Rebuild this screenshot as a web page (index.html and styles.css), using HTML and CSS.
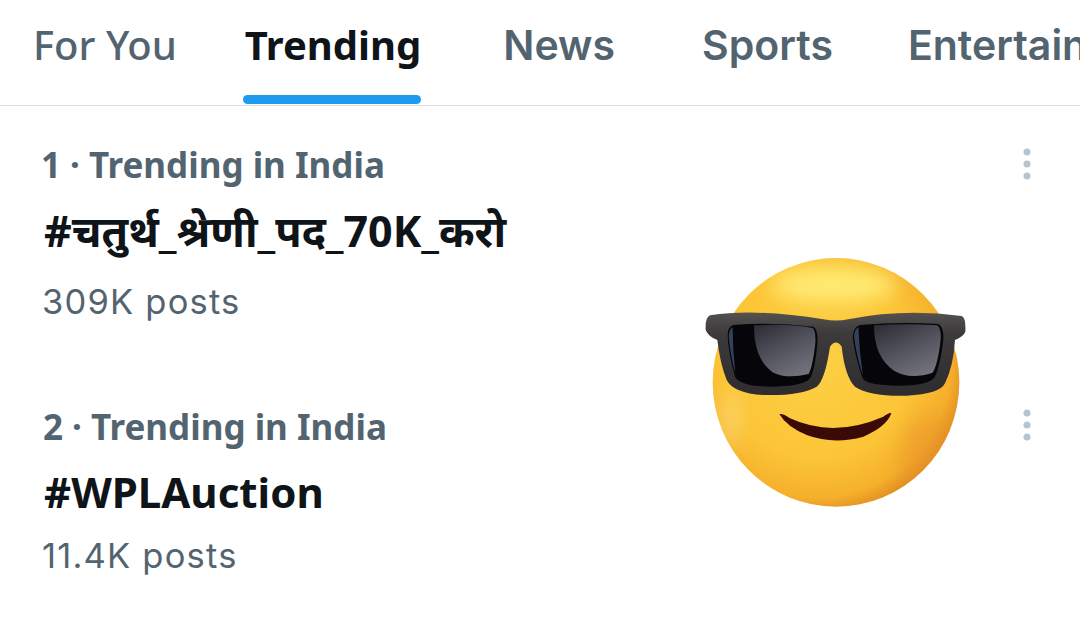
FILE: index.html
```html
<!DOCTYPE html>
<html lang="en">
<head>
<meta charset="utf-8">
<title>Trending</title>
<link rel="stylesheet" href="styles.css">
</head>
<body>
<div class="page">
  <nav class="tabs">
    <div class="tab t1">For You</div>
    <div class="tab t2 active">Trending<span class="bar"></span></div>
    <div class="tab t3 inter">News</div>
    <div class="tab t4 inter">Sports</div>
    <div class="tab t5 inter">Entertainment</div>
  </nav>
  <section class="list">
    <article class="row">
      <div class="meta">1 · Trending in India</div>
      <div class="topic hindi">#चतुर्थ_श्रेणी_पद_70K_करो</div>
      <div class="count">309K posts</div>
      <svg class="more" viewBox="0 0 8 32"><circle cx="4" cy="4" r="3.5"/><circle cx="4" cy="16" r="3.5"/><circle cx="4" cy="28" r="3.5"/></svg>
    </article>
    <article class="row second">
      <div class="meta">2 · Trending in India</div>
      <div class="topic">#WPLAuction</div>
      <div class="count tight">11.4K posts</div>
      <svg class="more" viewBox="0 0 8 32"><circle cx="4" cy="4" r="3.5"/><circle cx="4" cy="16" r="3.5"/><circle cx="4" cy="28" r="3.5"/></svg>
    </article>
  </section>
  <svg class="emoji" viewBox="0 0 900 840" aria-hidden="true">
    <defs>
      <radialGradient id="face" cx="0.42" cy="0.42" r="0.64">
        <stop offset="0" stop-color="#fdd044"/>
        <stop offset="0.6" stop-color="#fcc537"/>
        <stop offset="0.85" stop-color="#f5b02c"/>
        <stop offset="1" stop-color="#d9821c"/>
      </radialGradient>
      <linearGradient id="frame" x1="0" y1="0" x2="0" y2="1">
        <stop offset="0" stop-color="#555151"/>
        <stop offset="0.25" stop-color="#3c3a3a"/>
        <stop offset="1" stop-color="#2e2c2d"/>
      </linearGradient>
      <linearGradient id="shine" x1="0.1" y1="0" x2="0.7" y2="1">
        <stop offset="0" stop-color="#2e2e37"/>
        <stop offset="0.55" stop-color="#55555f"/>
        <stop offset="1" stop-color="#72727d"/>
      </linearGradient>
      <filter id="soft" x="-60%" y="-60%" width="220%" height="220%"><feGaussianBlur stdDeviation="30"/></filter>
      <clipPath id="faceclip"><ellipse cx="438" cy="427" rx="370" ry="373"/></clipPath>
    </defs>
    <ellipse cx="438" cy="427" rx="370" ry="373" fill="url(#face)"/>
    <g clip-path="url(#faceclip)">
      <ellipse cx="430" cy="135" rx="190" ry="55" fill="#ffee7a" opacity=".9" filter="url(#soft)"/>
      <ellipse cx="120" cy="540" rx="24" ry="90" fill="#ffe6a0" opacity=".55" filter="url(#soft)"/>
      <ellipse cx="720" cy="650" rx="90" ry="130" fill="#e8902a" opacity=".45" filter="url(#soft)"/>
    </g>
    <path fill="url(#frame)" d="M60 226Q200 205 400 238Q440 245 475 238Q640 205 815 228Q828 232 826 275Q820 290 795 300Q790 380 765 430Q750 462 650 467Q540 470 495 440Q465 410 455 320Q438 295 420 320Q405 420 380 440Q330 468 220 465Q130 460 110 420Q90 370 82 300Q55 290 47 270Q45 232 60 226Z"/>
    <path fill="#05050a" d="M130 255Q250 245 370 260Q385 270 382 310Q375 390 360 415Q340 440 240 440Q150 438 135 410Q115 340 113 285Q113 262 130 255Z"/>
    <path fill="#05050a" d="M510 255Q630 245 745 252Q762 260 760 300Q752 370 735 410Q720 435 630 437Q530 437 518 415Q495 350 488 290Q490 262 510 255Z"/>
    <path fill="#33415a" d="M128 262Q116 270 116 290Q122 350 136 400Q128 330 128 262Z"/>
    <path fill="#33415a" d="M505 262Q492 270 492 290Q500 350 518 405Q508 330 505 262Z"/>
    <path fill="url(#shine)" d="M192 256Q300 250 368 264Q378 272 376 310Q368 380 356 402Q290 418 250 398Q192 360 192 256Z"/>
    <path fill="url(#shine)" d="M552 256Q650 250 742 256Q754 264 752 300Q743 375 728 398Q660 420 612 392Q552 352 552 256Z"/>
    <path fill="#3a0a06" d="M268 522Q280 520 300 535Q430 595 580 530Q600 515 604 520Q590 560 520 590Q430 615 350 585Q290 560 268 522Z"/>
  </svg>
</div>
</body>
</html>
```
FILE: styles.css
```css
* { box-sizing: border-box; }
html, body { margin: 0; height: 100%; background: #fff; }
.page {
  position: relative;
  width: 1080px;
  height: 641px;
  overflow: hidden;
  font-family: "Noto Sans", "Noto Sans Devanagari", sans-serif;
  color: #536471;
}
.tabs {
  display: flex;
  height: 106px;
  border-bottom: 1px solid #d8dcdf;
  padding-left: 33px;
  white-space: nowrap;
}
.tab {
  position: relative;
  padding-top: 17px;
  font-size: 40px;
  line-height: 56px;
  font-weight: 500;
  flex: none;
}
.inter { font-family: Inter, sans-serif; font-weight: 600; font-size: 41px; }
.t2 { margin-left: 68px; }
.t3 { margin-left: 82px; }
.t4 { margin-left: 87px; }
.t5 { margin-left: 75px; }
.active { color: #0f1419; font-weight: 700; }
.bar {
  position: absolute;
  left: -2px;
  right: 0;
  bottom: 1px;
  height: 9px;
  border-radius: 5px;
  background: #1d9bf0;
}
.list { padding: 0 42px; }
.row { position: relative; padding-top: 36px; }
.second { padding-top: 79px; }
.meta { font-size: 35px; line-height: 46px; font-weight: 700; margin-left: -1px; }
.second .meta { margin-left: 1px; }
.topic {
  margin-top: 15px;
  margin-left: 2px;
  font-size: 42px;
  line-height: 56px;
  font-weight: 700;
  color: #0f1419;
}
.second .topic { margin-top: 14px; }
.hindi { font-size: 43px; }
.count {
  margin-top: 20px;
  font-family: Inter, sans-serif;
  font-size: 34.5px;
  line-height: 46px;
  letter-spacing: 1.2px;
}
.second .tight { margin-top: 13px; }
.more {
  position: absolute;
  right: 7px;
  top: 42px;
  width: 8px;
  height: 32px;
  fill: #b4c5cf;
}
.second .more { top: 84px; }
.emoji {
  position: absolute;
  left: 690px;
  top: 240px;
  width: 300px;
  height: 280px;
}
```
